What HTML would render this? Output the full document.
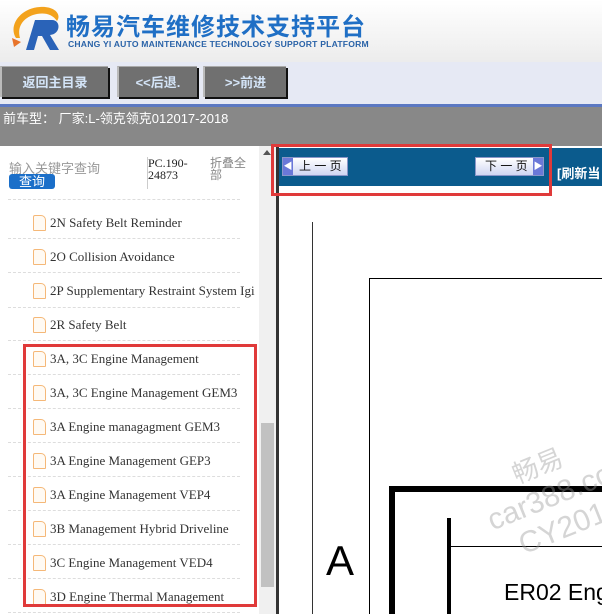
<!DOCTYPE html>
<html style="overflow:hidden"><head><meta charset="utf-8"><style>
*{margin:0;padding:0;box-sizing:border-box}
html,body{width:602px;height:614px;overflow:hidden}
body{position:relative;background:#fff;font-family:"Liberation Sans","Noto Sans CJK SC",sans-serif}
.a{position:absolute}
.hdr{left:0;top:0;width:602px;height:62px;background:linear-gradient(#fff,#ececec)}
.nav{left:0;top:62px;width:602px;height:42px;background:#e6e9f4}
.btn{top:66px;height:31px;background:#707070;color:#d4e4f7;font-weight:bold;font-size:13px;text-align:center;line-height:31px;box-shadow:2px 2px 0 #111;border-left:2px solid #bbb;border-top:1px solid #aaa}
.car{left:0;top:104px;width:602px;height:42px;background:#888;border-top:3px solid #5b78c2;color:#fff;font-size:13px;padding:1px 3px}
.item{left:8px;width:232px;height:34px;border-bottom:1px dashed #ddd;font-family:"Liberation Serif",serif;font-size:13px;color:#333;white-space:nowrap;overflow:hidden}
.item span{position:absolute;left:42px;top:10px}
.item i{position:absolute;left:25px;top:10px;width:13px;height:16px;border:1.5px solid #f5b878;border-radius:2px 5px 1px 1px;background:#fffaf3}
.red{border:3px solid #e03a3a}
.pg{top:157px;height:19px;background:linear-gradient(#fff,#cfd6f2);border:1px solid #8a96c8;font-size:12px;line-height:17px;color:#111}
</style></head><body>
<div class="a hdr"></div>
<svg class="a" style="left:10px;top:4px" width="56" height="48" viewBox="0 0 56 48">
<path d="M6 34 C-2 22 10 4 30 3 C44 2 52 10 47 17 C42 9 32 8 23 11 C12 15 7 24 10 34Z" fill="#f3a21c"/>
<path d="M16 46 L25 16 L42 16 C51 16 51 30 40 31 L49 46 L40 46 L32 32 L28 32 L24 46Z" fill="#2a63b8"/>
<path d="M2 34 l9 4 -7 5z" fill="#e8742a"/>
</svg>
<div class="a" style="left:66px;top:7px;font-size:24px;font-weight:bold;color:#1f6fc5;letter-spacing:1px">畅易汽车维修技术支持平台</div>
<div class="a" style="left:68px;top:39px;font-size:8.6px;font-weight:bold;color:#2a63a8;letter-spacing:0.2px;white-space:nowrap">CHANG YI AUTO MAINTENANCE TECHNOLOGY SUPPORT PLATFORM</div>
<div class="a nav"></div>
<div class="a btn" style="left:0;width:108px">返回主目录</div>
<div class="a btn" style="left:117px;width:80px">&lt;&lt;后退.</div>
<div class="a btn" style="left:203px;width:83px">&gt;&gt;前进</div>
<div class="a car">前车型： 厂家:L-领克领克012017-2018</div>
<div class="a" style="left:9px;top:158px;font-size:13px;color:#999">输入关键字查询</div>
<div class="a" style="left:9px;top:174px;width:46px;height:15px;background:#1b6fc9;color:#fff;border-radius:3px;font-size:13px;text-align:center;line-height:15px">查询</div>
<div class="a" style="left:147px;top:157px;font-family:'Liberation Serif',serif;font-size:12px;line-height:12px;color:#222;border-left:1px solid #ccc;height:32px">PC.190-<br>24873</div>
<div class="a" style="left:210px;top:157px;font-size:12px;line-height:12px;color:#888;width:40px">折叠全<br>部</div>
<div class="a" style="left:8px;top:199px;width:232px;border-top:1px dashed #ddd"></div>
<div class="a item" style="top:205px"><i></i><span>2N Safety Belt Reminder</span></div>
<div class="a item" style="top:239px"><i></i><span>2O Collision Avoidance</span></div>
<div class="a item" style="top:273px;width:251px;border:none"><i></i><span>2P Supplementary Restraint System Igi</span></div>
<div class="a" style="left:8px;top:307px;width:232px;border-top:1px dashed #ddd"></div>
<div class="a item" style="top:307px"><i></i><span>2R Safety Belt</span></div>
<div class="a item" style="top:341px"><i></i><span>3A, 3C Engine Management</span></div>
<div class="a item" style="top:375px"><i></i><span>3A, 3C Engine Management GEM3</span></div>
<div class="a item" style="top:409px"><i></i><span>3A Engine managagment GEM3</span></div>
<div class="a item" style="top:443px"><i></i><span>3A Engine Management GEP3</span></div>
<div class="a item" style="top:477px"><i></i><span>3A Engine Management VEP4</span></div>
<div class="a item" style="top:511px"><i></i><span>3B Management Hybrid Driveline</span></div>
<div class="a item" style="top:545px"><i></i><span>3C Engine Management VED4</span></div>
<div class="a item" style="top:579px"><i></i><span>3D Engine Thermal Management</span></div>
<div class="a red" style="left:23px;top:344px;width:234px;height:263px"></div>
<div class="a" style="left:259px;top:146px;width:17px;height:468px;background:#f0f0f0"></div>
<div class="a" style="left:263px;top:150px;width:0;height:0;border:4px solid transparent;border-bottom:5px solid #555;border-top:0"></div>
<div class="a" style="left:261px;top:423px;width:13px;height:164px;background:#c1c1c1"></div>
<div class="a" style="left:276px;top:146px;width:3px;height:468px;background:#333"></div>
<div class="a" style="left:279px;top:148px;width:323px;height:38px;background:#0b5b8d"></div>
<div class="a pg" style="left:282px;width:66px;padding-left:16px"><span style="position:absolute;left:0;top:0;width:10px;height:17px;background:#6a78d8;color:#fff;font-size:9px;text-align:center">◀</span>上 一 页</div>
<div class="a pg" style="left:475px;width:69px;padding-left:9px">下 一 页<span style="position:absolute;right:0;top:0;width:10px;height:17px;background:#6a78d8;color:#fff;font-size:9px;text-align:center">▶</span></div>
<div class="a" style="left:557px;top:163px;color:#fff;font-weight:bold;font-size:13px;white-space:nowrap">[刷新当</div>
<div class="a red" style="left:271px;top:144px;width:281px;height:52px"></div>
<div class="a" style="left:312px;top:222px;width:1px;height:392px;background:#333"></div>
<div class="a" style="left:369px;top:278px;width:233px;height:336px;border-left:1.5px solid #000;border-top:1.5px solid #000"></div>
<div class="a" style="left:389px;top:486px;width:213px;height:128px;border-left:6px solid #000;border-top:6px solid #000"></div>
<div class="a" style="left:447px;top:518px;width:4px;height:96px;background:#000"></div>
<div class="a" style="left:451px;top:546px;width:151px;height:1px;background:#000"></div>
<div class="a" style="left:326px;top:537px;font-size:42px;color:#000">A</div>
<div class="a" style="left:504px;top:579px;font-size:23px;color:#000;white-space:nowrap">ER02 Eng</div>
<div class="a" style="left:470px;top:475px;transform:rotate(-22deg);transform-origin:left top;color:rgba(150,150,150,0.4);font-size:30px;line-height:34px;white-space:nowrap">
<div style="padding-left:40px;font-size:26px">畅易</div><div>car388.co</div><div style="padding-left:20px">CY2016</div></div>
</body></html>
